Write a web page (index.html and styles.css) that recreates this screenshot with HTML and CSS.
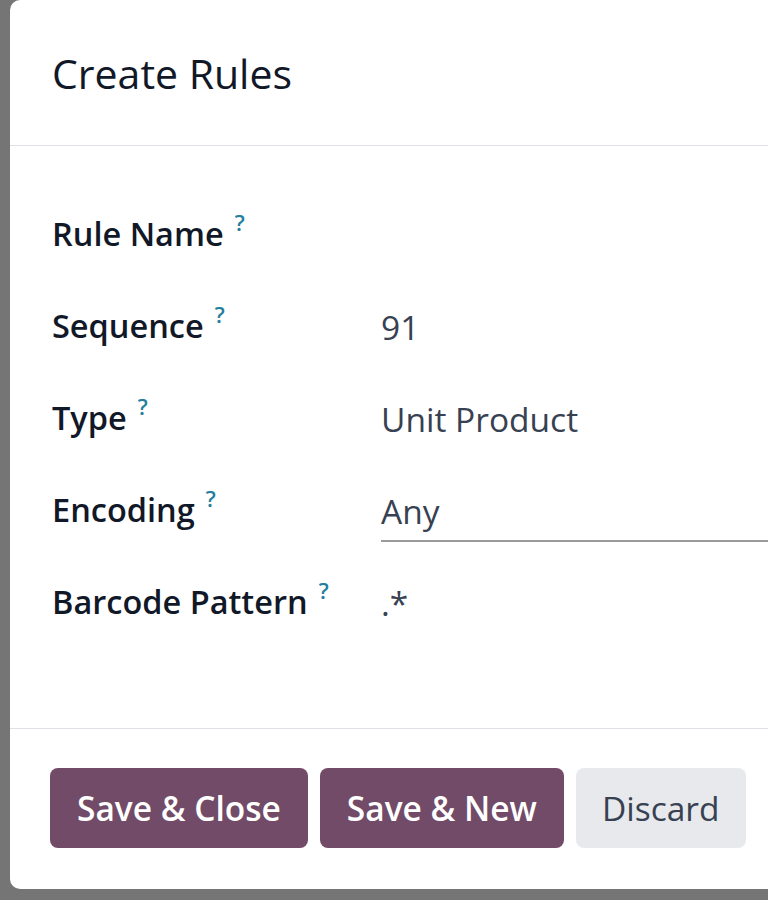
FILE: index.html
```html
<!DOCTYPE html>
<html lang="en">
<head>
<meta charset="utf-8">
<title>Create Rules</title>
<link rel="stylesheet" href="styles.css">
</head>
<body>
<div class="backdrop">
  <div class="modal">
    <header class="modal-header">
      <h4 class="modal-title">Create Rules</h4>
    </header>
    <main class="modal-body">
      <div class="form-grid">
        <div class="label">Rule Name<sup class="help">?</sup></div>
        <div class="value"></div>
        <div class="label">Sequence<sup class="help">?</sup></div>
        <div class="value">91</div>
        <div class="label">Type<sup class="help">?</sup></div>
        <div class="value">Unit Product</div>
        <div class="label">Encoding<sup class="help">?</sup></div>
        <div class="value value-select">Any</div>
        <div class="label">Barcode Pattern<sup class="help">?</sup></div>
        <div class="value">.*</div>
      </div>
    </main>
    <footer class="modal-footer">
      <button class="btn btn-primary">Save &amp; Close</button>
      <button class="btn btn-primary">Save &amp; New</button>
      <button class="btn btn-secondary">Discard</button>
    </footer>
  </div>
</div>
</body>
</html>
```

FILE: styles.css
```css
html, body {
  margin: 0;
  padding: 0;
}
body {
  width: 768px;
  height: 900px;
  overflow: hidden;
  background: #757575;
  font-family: "Open Sans", "Noto Sans", sans-serif;
}
.backdrop {
  padding-left: 10px;
}
.modal {
  width: 800px;
  height: 889px;
  background: #ffffff;
  border-radius: 10px;
  display: flex;
  flex-direction: column;
}
.modal-header {
  flex: none;
  height: 146px;
  border-bottom: 1px solid #dee2e6;
  display: flex;
  align-items: center;
  padding: 2px 0 0 42px;
  box-sizing: border-box;
}
.modal-title {
  margin: 0;
  font-size: 41px;
  font-weight: 400;
  color: #111827;
  line-height: 1;
}
.modal-body {
  height: 583px;
  flex: none;
  border-bottom: 1px solid #dee2e6;
  padding: 65px 0 0 42px;
  box-sizing: border-box;
}
.form-grid {
  display: grid;
  grid-template-columns: 329px 1fr;
  grid-auto-rows: 46px;
  row-gap: 46px;
  align-items: start;
}
.label {
  font-size: 32.5px;
  font-weight: 600;
  color: #111827;
  line-height: 46px;
  white-space: nowrap;
}
.help {
  font-size: 22px;
  font-weight: 600;
  color: #237f9c;
  margin-left: 11px;
  vertical-align: baseline;
  position: relative;
  top: -15px;
}
.value {
  font-size: 33.5px;
  color: #374151;
  line-height: 46px;
  min-height: 46px;
  padding-top: 1px;
  box-sizing: border-box;
}
.value-select {
  padding-bottom: 6px;
  border-bottom: 2px solid #9a9a9a;
}
.modal-footer {
  display: flex;
  gap: 12px;
  padding: 39px 0 0 40px;
}
.btn {
  height: 80px;
  border: none;
  border-radius: 8px;
  font-family: inherit;
  font-size: 33.5px;
  font-weight: 600;
  padding: 0 27px;
}
.btn-primary {
  background: #714b67;
  color: #ffffff;
}
.btn-secondary {
  background: #e7e9ed;
  color: #374151;
  font-weight: 500;
  padding: 0 26px;
}
```
